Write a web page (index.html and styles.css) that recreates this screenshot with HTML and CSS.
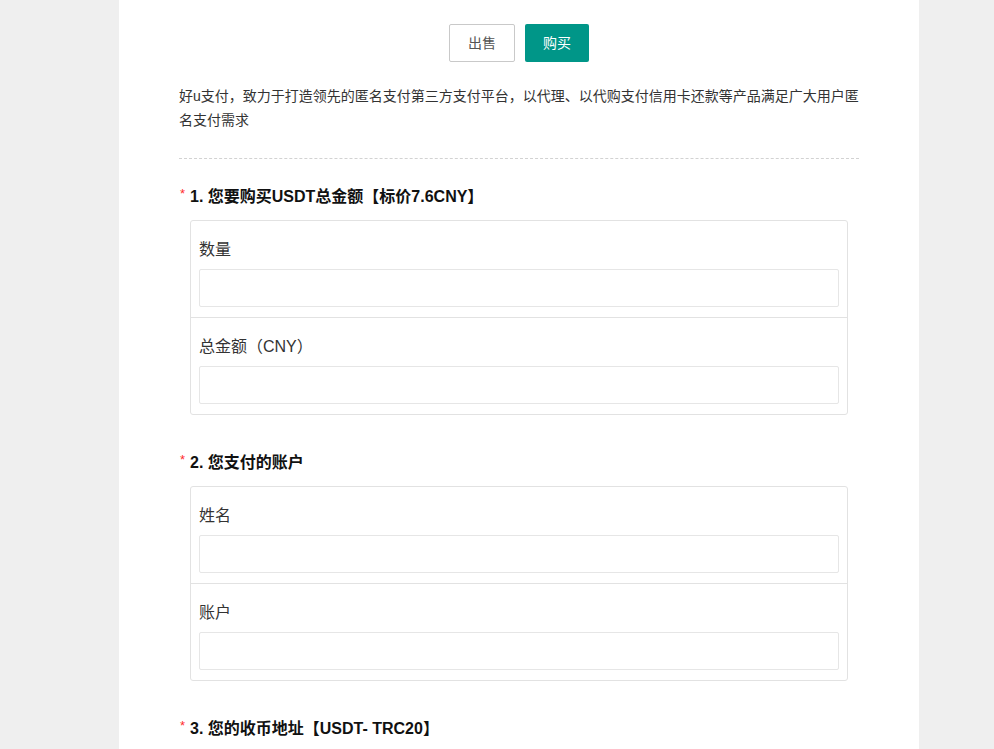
FILE: index.html
```html
<!DOCTYPE html>
<html lang="zh-CN">
<head>
<meta charset="utf-8">
<title>好u支付</title>
<link rel="stylesheet" href="styles.css">
</head>
<body>
<div class="page">
  <div class="tabs">
    <a class="btn btn-primary">出售</a>
    <a class="btn btn-main">购买</a>
  </div>
  <p class="intro">好u支付，致力于打造领先的匿名支付第三方支付平台，以代理、以代购支付信用卡还款等产品满足广大用户匿名支付需求</p>
  <div class="divider"></div>

  <div class="section">
    <div class="q-title"><span class="req">*</span>1. 您要购买USDT总金额【标价7.6CNY】</div>
    <div class="group">
      <div class="item">
        <div class="label">数量</div>
        <input class="input" type="text">
      </div>
      <div class="item">
        <div class="label">总金额（CNY）</div>
        <input class="input" type="text">
      </div>
    </div>
  </div>

  <div class="section">
    <div class="q-title"><span class="req">*</span>2. 您支付的账户</div>
    <div class="group">
      <div class="item">
        <div class="label">姓名</div>
        <input class="input" type="text">
      </div>
      <div class="item">
        <div class="label">账户</div>
        <input class="input" type="text">
      </div>
    </div>
  </div>

  <div class="section">
    <div class="q-title"><span class="req">*</span>3. 您的收币地址【USDT- TRC20】</div>
    <div class="group">
      <div class="item">
        <input class="input" type="text">
      </div>
    </div>
  </div>
</div>
</body>
</html>
```

FILE: styles.css
```css
html, body {
  margin: 0;
  padding: 0;
  background: #efefef;
}
body {
  font-family: "Liberation Sans", "Noto Sans CJK SC", sans-serif;
  color: #333;
}
.page {
  width: 680px;
  margin-left: 119px;
  padding: 24px 60px 40px;
  background: #fff;
}
.tabs {
  display: flex;
  justify-content: center;
  gap: 10px;
}
.btn {
  display: inline-block;
  box-sizing: border-box;
  height: 38px;
  line-height: 38px;
  padding: 0 18px;
  font-size: 14px;
  border-radius: 2px;
  cursor: pointer;
}
.btn-primary {
  border: 1px solid #c9c9c9;
  line-height: 36px;
  color: #555;
  background: #fff;
}
.btn-main {
  background: #009688;
  color: #fff;
}
.intro {
  margin: 22px 0 0;
  font-size: 14px;
  line-height: 24px;
  color: #333;
}
.divider {
  margin-top: 26px;
  border-top: 1px dashed #d2d2d2;
}
.section {
  margin-top: 26px;
}
.section + .section {
  margin-top: 36px;
}
.q-title {
  font-size: 16px;
  font-weight: bold;
  line-height: 24px;
  color: #111;
}
.req {
  display: inline-block;
  width: 10px;
  margin-left: 1px;
  color: #ff2b2b;
  font-size: 13px;
  font-weight: normal;
  vertical-align: 4px;
  line-height: 1;
}
.group {
  margin: 11px 11px 0;
  border: 1px solid #e2e2e2;
  border-radius: 3px;
}
.item {
  padding: 10px 8px;
}
.item + .item {
  border-top: 1px solid #e2e2e2;
}
.label {
  height: 38px;
  line-height: 38px;
  font-size: 16px;
  color: #333;
}
.input {
  display: block;
  box-sizing: border-box;
  width: 100%;
  height: 38px;
  margin: 0;
  padding: 0 10px;
  border: 1px solid #e6e6e6;
  border-radius: 2px;
  background: #fff;
  font-size: 14px;
  outline: none;
}
```
